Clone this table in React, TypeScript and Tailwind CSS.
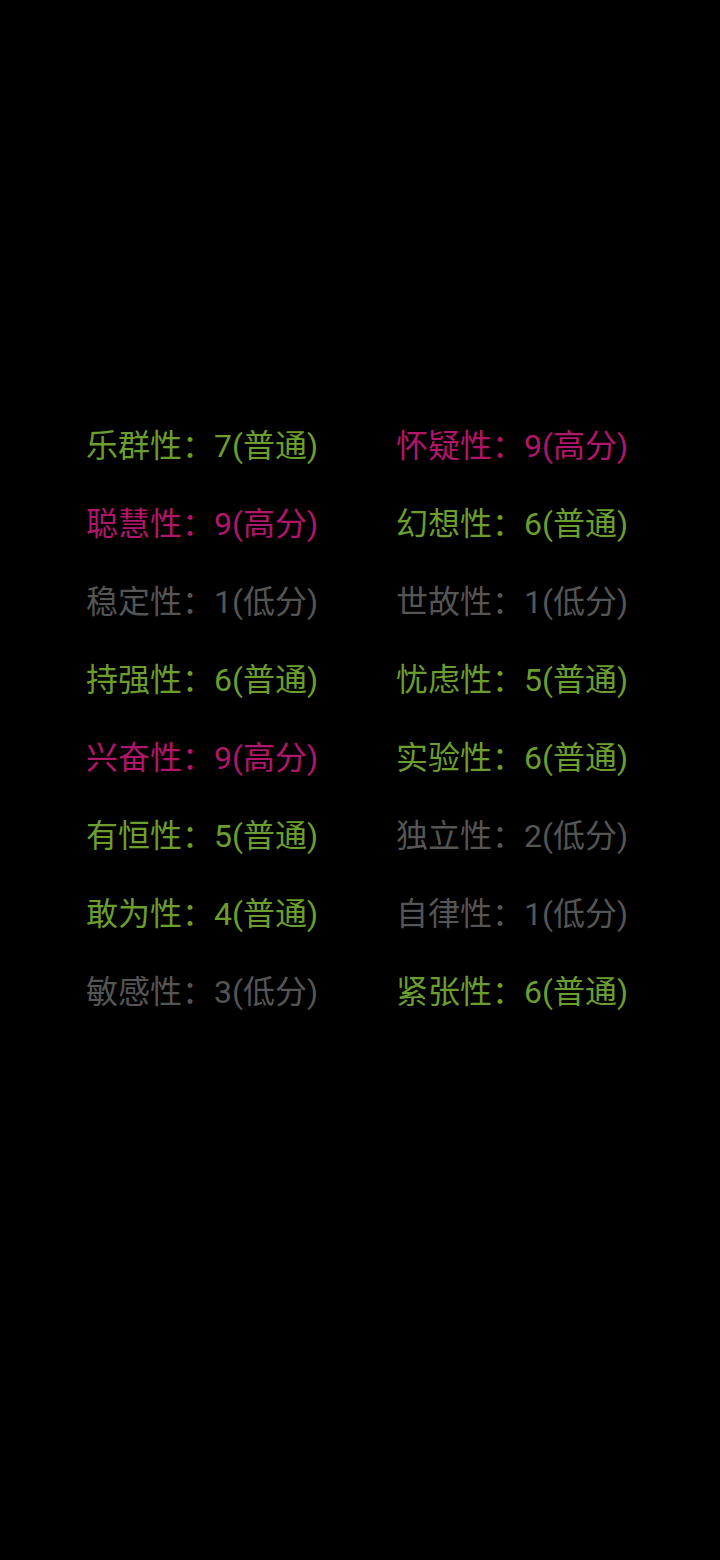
const G = "text-[#6b9e2d]";
const M = "text-[#b0166a]";
const D = "text-[#555555]";

const rows: [string, string, string, string][] = [
  ["乐群性：7(普通)", G, "怀疑性：9(高分)", M],
  ["聪慧性：9(高分)", M, "幻想性：6(普通)", G],
  ["稳定性：1(低分)", D, "世故性：1(低分)", D],
  ["持强性：6(普通)", G, "忧虑性：5(普通)", G],
  ["兴奋性：9(高分)", M, "实验性：6(普通)", G],
  ["有恒性：5(普通)", G, "独立性：2(低分)", D],
  ["敢为性：4(普通)", G, "自律性：1(低分)", D],
  ["敏感性：3(低分)", D, "紧张性：6(普通)", G],
];

export default function App() {
  return (
    <div
      className="w-[720px] h-[1560px] bg-black pt-[407px] pl-[86px]"
      style={{ fontFamily: "Roboto, 'Noto Sans CJK SC', sans-serif" }}
    >
      <div className="grid grid-cols-[310px_310px]">
        {rows.map(([a, ca, b, cb], i) => (
          <div key={i} className="contents">
            <div className={`h-[78px] leading-[78px] text-[32px] whitespace-nowrap ${ca}`}>{a}</div>
            <div className={`h-[78px] leading-[78px] text-[32px] whitespace-nowrap ${cb}`}>{b}</div>
          </div>
        ))}
      </div>
    </div>
  );
}
